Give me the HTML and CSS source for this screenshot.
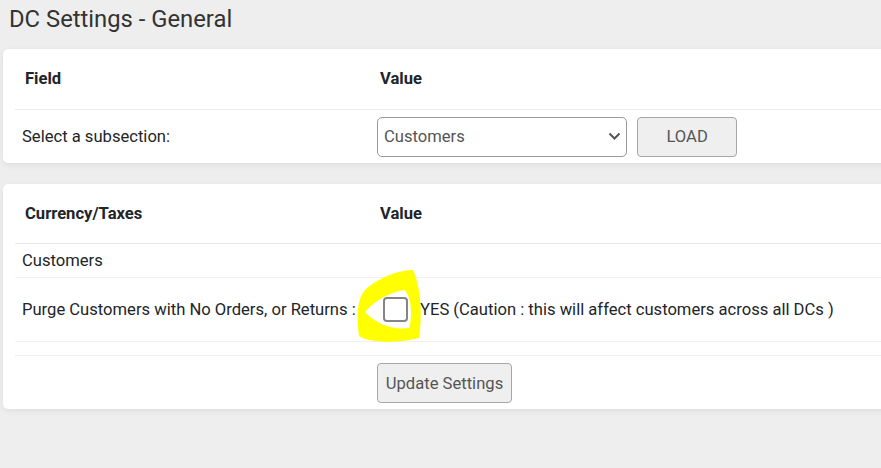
FILE: index.html
```html
<!DOCTYPE html>
<html dir="ltr" lang="en">
<head>
	<title>DC Settings - General</title>
	<meta http-equiv="content-type" content="text/html; charset=utf-8" />
	<meta name="viewport" content="width=device-width, initial-scale=1.0">
	<link rel="stylesheet" href="styles.css">
</head>
<body>
	<h1 class="title">DC Settings - General</h1>

	<div class="card">
		<table class="grid">
			<tr class="head">
				<th class="col1">Field</th>
				<th>Value</th>
			</tr>
			<tr class="row">
				<td>Select a subsection:</td>
				<td>
					<select class="picker">
						<option>Customers</option>
						<option>Currency/Taxes</option>
					</select>
					<button class="btn btn-load">LOAD</button>
				</td>
			</tr>
		</table>
	</div>

	<div class="card">
		<table class="grid">
			<tr class="head">
				<th class="col1">Currency/Taxes</th>
				<th>Value</th>
			</tr>
			<tr class="row light first">
				<td colspan="2">Customers</td>
			</tr>
			<tr class="row light tall">
				<td>Purge Customers with No Orders, or Returns :</td>
				<td>
					<label class="check">
						<input type="checkbox" name="purge">
						<span>YES (Caution : this will affect customers across all DCs )</span>
					</label>
				</td>
			</tr>
			<tr class="row light spacer">
				<td></td>
				<td></td>
			</tr>
			<tr class="row light">
				<td></td>
				<td><button class="btn btn-update">Update Settings</button></td>
			</tr>
		</table>
	</div>

	<!-- highlighter mark over the checkbox -->
	<svg class="mark" viewBox="355 268 70 78" width="70" height="78">
		<path fill="#ffff00" fill-rule="evenodd" d="M413,270 C400,270 379,277 366,289 C356,298 357,320 359,336 C372,344 401,343 419,338 C422,320 422,290 413,270 Z M365,312 C375,300 391,292 404,290 C411,295 413,315 409,328 C394,330 377,325 365,312 Z"/>
	</svg>
</body>
</html>
```

FILE: styles.css
```css
html { width: 100%; }
body { margin: 0; padding: 0 0 0 3px; background-color: #eeeeee; font-family: Roboto, "Liberation Sans", sans-serif; font-size: 16.6px; color: #212529; overflow: hidden; position: relative; min-height: 468px; }
.title { margin: 0; padding: 4px 0 0 6px; height: 49px; box-sizing: border-box; font-size: 23.8px; font-weight: 400; color: #333; line-height: 30px; }
.card { width: 1000px; background: #fff; border-radius: 5px; box-shadow: 0 2px 6px rgba(0,0,0,0.07); margin-bottom: 20px; padding: 0 12px; box-sizing: border-box; }
.card + .card { margin-top: 21px; }
.grid { width: 100%; border-collapse: collapse; }
.grid th { text-align: left; font-weight: 700; height: 60px; padding: 0 10px; box-sizing: border-box; }
.col1 { width: 355px; }
.head { border-bottom: 1px solid #e9e9e9; }
.grid td { padding: 7px 7px 6px; vertical-align: middle; line-height: 19px; }
.first td { padding-top: 7px; padding-bottom: 7px; }
.light + .light { border-top: 1px solid #f1f1f4; }
.tall td { padding-top: 19px; padding-bottom: 19px; }
.spacer td { height: 13px; padding: 0; }
.picker { -webkit-appearance: none; appearance: none; width: 250px; height: 40px; border: 1px solid #9a9a9a; border-radius: 5px; padding: 0 30px 0 6px; font-family: inherit; font-size: 16.6px; color: #555; vertical-align: middle; background: #fff url("data:image/svg+xml,%3Csvg xmlns='http://www.w3.org/2000/svg' width='13' height='9' viewBox='0 0 13 9'%3E%3Cpath d='M1.5 1.5 L6.5 6.5 L11.5 1.5' fill='none' stroke='%23555' stroke-width='2'/%3E%3C/svg%3E") no-repeat right 5px center; }
.btn { height: 40px; border: 1px solid #a6a6a6; border-radius: 4px; background: #efefef; font-family: inherit; font-size: 16.6px; color: #555; vertical-align: middle; }
.btn-load { width: 100px; margin-left: 6px; }
.btn-update { width: 135px; }
.check { display: flex; align-items: center; }
.check input { -webkit-appearance: none; appearance: none; width: 25px; height: 25px; margin: 0 12px 0 6px; border: 2px solid #858585; border-radius: 4px; background: #fff; box-sizing: border-box; }
.mark { position: absolute; left: 355px; top: 268px; }
```
